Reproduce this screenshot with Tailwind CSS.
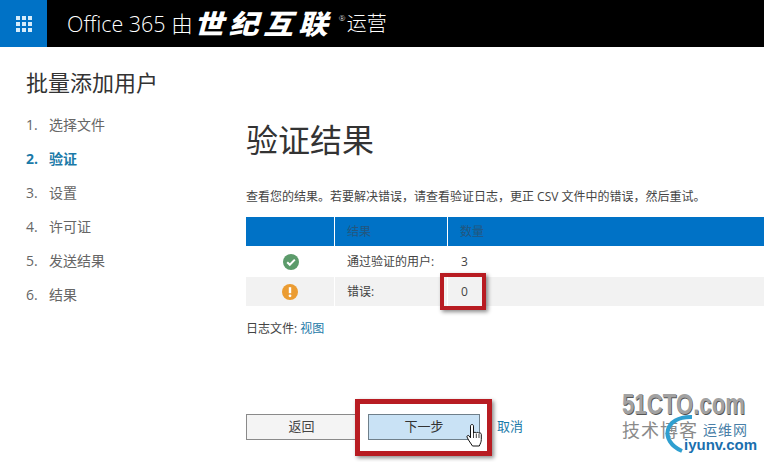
<!DOCTYPE html>
<html lang="zh-CN">
<head>
  <meta charset="UTF-8" />
  <title>批量添加用户</title>
  <script src="https://cdn.jsdelivr.net/npm/@tailwindcss/browser@4"></script>
</head>
<body class="relative w-[764px] h-[462px] overflow-hidden bg-white font-['Open_Sans','Noto_Sans_CJK_SC',sans-serif] text-[#444]">

  <!-- top bar -->
  <header class="flex items-center h-[47px] bg-black text-white">
    <div class="flex items-center justify-center w-[47px] h-[47px] bg-[#0072c6]">
      <svg width="16" height="16" viewBox="0 0 16 16" fill="#d6ecfa">
        <rect x="0" y="0" width="4" height="4" /><rect x="6" y="0" width="4" height="4" /><rect x="12" y="0" width="4" height="4" />
        <rect x="0" y="6" width="4" height="4" /><rect x="6" y="6" width="4" height="4" /><rect x="12" y="6" width="4" height="4" />
        <rect x="0" y="12" width="4" height="4" /><rect x="6" y="12" width="4" height="4" /><rect x="12" y="12" width="4" height="4" />
      </svg>
    </div>
    <div class="flex items-center ml-5 text-[21.5px] leading-none font-light whitespace-nowrap">
      <span>Office 365 由</span>
      <span class="ml-[1px] w-[145px] origin-left scale-x-110 text-[27px] font-black italic tracking-[4.5px]">世纪互联</span>
      <span class="w-[7px] text-[8px] -mt-3">®</span>
      <span class="ml-[1px] text-[20px]">运营</span>
    </div>
  </header>

  <div class="flex">
    <!-- steps -->
    <aside class="w-[246px] shrink-0 pl-[26px]">
      <h2 class="mt-[22px] text-[22px] leading-[26px] text-[#333]">批量添加用户</h2>
      <ol class="mt-[12px] text-[14px] text-[#666]">
        <li class="flex items-center h-[34px]"><span class="w-[23px]">1.</span>选择文件</li>
        <li class="flex items-center h-[34px] font-bold text-[#1b7aa8]"><span class="w-[23px]">2.</span>验证</li>
        <li class="flex items-center h-[34px]"><span class="w-[23px]">3.</span>设置</li>
        <li class="flex items-center h-[34px]"><span class="w-[23px]">4.</span>许可证</li>
        <li class="flex items-center h-[34px]"><span class="w-[23px]">5.</span>发送结果</li>
        <li class="flex items-center h-[34px]"><span class="w-[23px]">6.</span>结果</li>
      </ol>
    </aside>

    <!-- main -->
    <main class="flex-1">
      <h1 class="mt-[73px] text-[32px] leading-[40px] text-[#333]">验证结果</h1>
      <p class="mt-[27px] text-[12px] leading-[20px] text-[#444] whitespace-nowrap">查看您的结果。若要解决错误，请查看验证日志，更正 CSV 文件中的错误，然后重试。</p>

      <div class="mt-[10px] text-[12px]">
        <div class="flex h-[29px] bg-[#0072c6] text-[#23567e]">
          <div class="w-[89px] border-r border-white"></div>
          <div class="flex items-center w-[113px] pl-[12px] border-r border-white">结果</div>
          <div class="flex items-center pl-[12px]">数量</div>
        </div>
        <div class="flex h-[31px]">
          <div class="flex items-center justify-center w-[89px]">
            <svg width="16" height="16" viewBox="0 0 16 16"><circle cx="8" cy="8" r="8" fill="#5c9b6b" /><path d="M4.2 8.2l2.6 2.6 5-5.2" fill="none" stroke="#fff" stroke-width="2" /></svg>
          </div>
          <div class="flex items-center w-[113px] pl-[12px]">通过验证的用户:</div>
          <div class="flex items-center pl-[13px]">3</div>
        </div>
        <div class="flex h-[29px] bg-[#f2f2f2]">
          <div class="flex items-center justify-center w-[89px] border-r border-white">
            <svg width="16" height="16" viewBox="0 0 16 16"><circle cx="8" cy="8" r="8" fill="#eb9c32" /><path d="M8 3.2v6" stroke="#fff" stroke-width="2.4" /><circle cx="8" cy="11.8" r="1.4" fill="#fff" /></svg>
          </div>
          <div class="flex items-center w-[113px] pl-[12px] border-r border-white">错误:</div>
          <div class="flex items-center pl-[13px]">0</div>
        </div>
      </div>

      <p class="mt-[14px] text-[12px] leading-[18px]">日志文件: <a class="text-[#1b7aa8]">视图</a></p>

      <div class="flex items-center mt-[76px] text-[13px]">
        <button class="w-[111px] h-[26px] bg-[#f4f4f4] border border-[#8a8a8a]">返回</button>
        <button class="ml-[11px] w-[112px] h-[26px] bg-[#c9e2f5] border border-[#6f7f8a] text-[#333]">下一步</button>
        <a class="ml-[17px] text-[#1b7aa8]">取消</a>
      </div>
    </main>
  </div>

  <!-- annotations over the screenshot -->
  <div class="absolute left-[440px] top-[273px] w-[46px] h-[37px] border-[4px] border-[#b81c22] shadow-[2px_2px_4px_rgba(0,0,0,0.45)]"></div>
  <div class="absolute left-[355px] top-[399px] w-[137px] h-[57px] border-[5px] border-[#b81c22] shadow-[2px_2px_4px_rgba(0,0,0,0.45)]"></div>

  <!-- pointer cursor -->
  <svg class="absolute left-[466px] top-[423px]" width="18" height="25" viewBox="0 0 18 25">
    <path d="M6 1.5c1 0 1.5.7 1.5 1.6V10c.3-1 2.5-1 2.8 0 .3-.9 2.4-.8 2.7.3.5-.7 2.3-.4 2.3 1v5.2c0 2.5-1 4-2 6.5H6.500L2.500 17 1 14c-.4-1.200 1-2 2-1.200l1.500 2V3.100C4.500 2.200 5 1.500 6 1.500z" fill="#fff" stroke="#111" stroke-width="1" stroke-linejoin="round" />
    <path d="M7.500 10v5M10.300 10.500v4.500M13 11v4" stroke="#111" stroke-width="0.8" fill="none" />
  </svg>

  <!-- watermark -->
  <div class="absolute left-[622px] top-[390px] w-[142px] h-[64px] font-['Liberation_Sans',sans-serif]">
    <div class="absolute left-0 top-0 origin-left scale-x-[0.74] text-[30px] leading-[28px] font-bold text-[#a2a2a2] [text-shadow:1px_1px_0_#555] whitespace-nowrap">51CTO.com</div>
    <div class="absolute left-0 top-[28px] text-[18px] leading-[22px] text-[#8a8a8a] font-['Noto_Sans_CJK_SC',sans-serif] tracking-[1px] whitespace-nowrap">技术博客</div>
    <svg class="absolute left-[40px] top-[23px]" width="50" height="40" viewBox="0 0 50 40"><path d="M20 38C-3 28 2 3 30 4" fill="none" stroke="#2f9fd0" stroke-width="4" /></svg>
    <div class="absolute left-[81px] top-[31px] text-[14px] leading-[16px] text-[#4a7fa8] font-['Noto_Sans_CJK_SC',sans-serif] tracking-[1px] whitespace-nowrap">运维网</div>
    <div class="absolute left-[62px] top-[47px] text-[15px] leading-[16px] font-bold text-[#1a6fae] whitespace-nowrap">iyunv.com</div>
  </div>
</body>
</html>
